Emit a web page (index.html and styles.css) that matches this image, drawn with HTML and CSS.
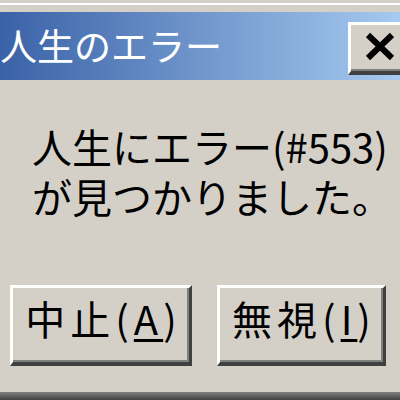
FILE: index.html
```html
<!DOCTYPE html>
<html lang="ja">

<head>
    <meta charset="UTF-8">
    <meta name="viewport" content="width=device-width, initial-scale=1.0">
    <title>人生のエラー</title>
    <link rel="stylesheet" href="styles.css">
</head>

<body>
    <div class="window">
        <div class="frame">
            <!-- Title bar -->
            <div class="titlebar">
                <span class="title">人生のエラー</span>
                <button class="close-btn" aria-label="閉じる">
                    <svg width="32" height="29" viewBox="0 0 32 29">
                        <path d="M4 3 L28 26 M28 3 L4 26" stroke="#000" stroke-width="6" fill="none" />
                    </svg>
                </button>
            </div>

            <!-- Message -->
            <div class="message">
                <p>人生にエラー(#553)</p>
                <p>が見つかりました。</p>
            </div>

            <!-- Buttons -->
            <div class="button-row">
                <button class="dlg-btn abort">中止(<u>A</u>)</button>
                <button class="dlg-btn ignore">無視(<u>I</u>)</button>
            </div>

            <div class="bottom-edge"></div>
        </div>
    </div>
</body>

</html>
```

FILE: styles.css
```css
* {
    margin: 0;
    padding: 0;
    box-sizing: border-box;
}

body {
    font-family: 'Noto Sans CJK JP', 'Noto Sans', sans-serif;
    background-color: #d4d0c8;
    color: #000;
    overflow: hidden;
}

.window {
    height: 400px;
    padding-top: 3px;
    display: flex;
    flex-direction: column;
}

.frame {
    flex: 1;
    border-top: 2px solid #fff;
    padding-top: 7px;
    display: flex;
    flex-direction: column;
}

.titlebar {
    height: 68px;
    display: flex;
    align-items: center;
    background: linear-gradient(to right, #3a62a7, #a6caf0);
}

.title {
    flex: 1;
    color: #fff;
    font-size: 37px;
    line-height: 1;
    margin-top: -2px;
}

.close-btn {
    width: 64px;
    height: 53px;
    margin-right: -12px;
    margin-top: 4px;
    background-color: #d4d0c8;
    border-style: solid;
    border-width: 3px 3px 4px 3px;
    border-color: #fff #404040 #404040 #fff;
    box-shadow: inset -2px -2px 0 #808080;
    display: flex;
    align-items: center;
    padding-left: 13px;
    padding-bottom: 2px;
}

.message {
    padding: 41px 0 0 32px;
    font-size: 40px;
    line-height: 50px;
    white-space: nowrap;
}

.button-row {
    display: flex;
    gap: 25px;
    padding-left: 10px;
    margin-top: 64px;
}

.dlg-btn {
    height: 81px;
    font-family: inherit;
    font-size: 40px;
    line-height: 1;
    letter-spacing: 5px;
    text-indent: 5px;
    color: #000;
    background-color: #d4d0c8;
    border-style: solid;
    border-width: 3px 3px 4px 3px;
    border-color: #fff #404040 #404040 #fff;
    box-shadow: inset -2px -2px 0 #808080;
    padding-bottom: 14px;
}

.dlg-btn u {
    text-underline-offset: 4px;
    text-decoration-thickness: 3px;
}

.abort {
    width: 182px;
}

.ignore {
    width: 169px;
}

.bottom-edge {
    margin-top: auto;
    height: 8px;
    background: linear-gradient(#808080, #404040);
}
```
